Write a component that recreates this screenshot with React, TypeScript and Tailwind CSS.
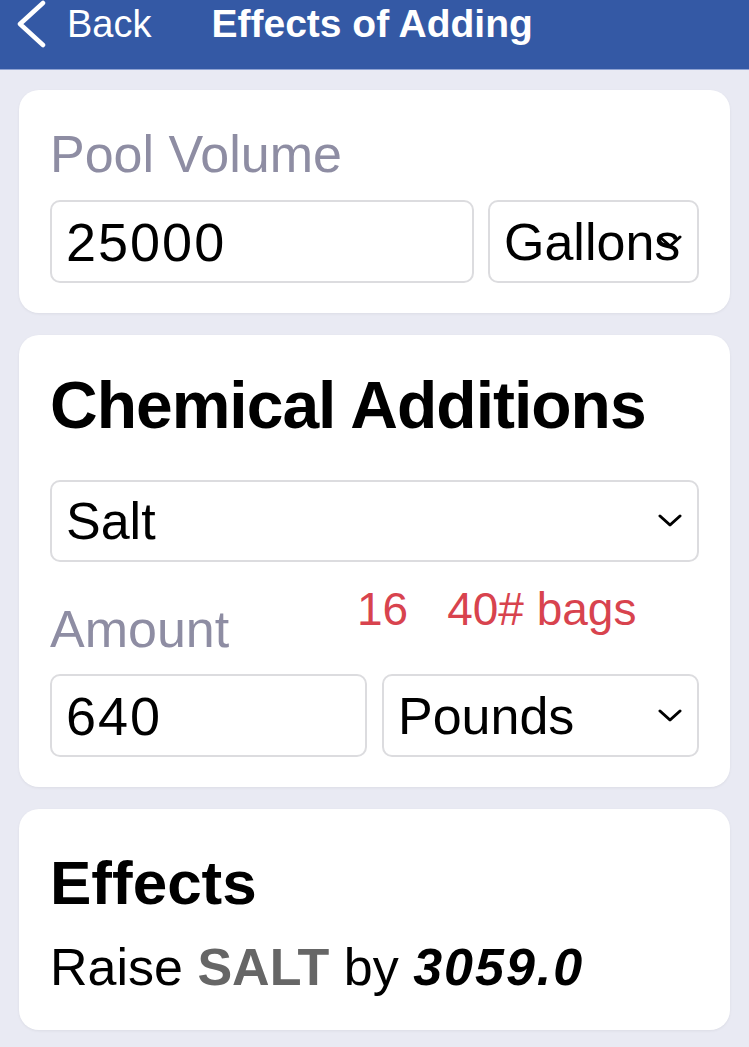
import React from "react";

function Chevron() {
  return (
    <svg
      width="24"
      height="14"
      viewBox="0 0 24 14"
      className="absolute right-[15px] top-1/2 -translate-y-1/2"
    >
      <polyline
        points="2,2 12,11 22,2"
        fill="none"
        stroke="#000"
        strokeWidth="3"
        strokeLinecap="round"
        strokeLinejoin="round"
      />
    </svg>
  );
}

function Field({
  value,
  select = false,
  numeric = false,
  className = "",
}: {
  value: string;
  select?: boolean;
  numeric?: boolean;
  className?: string;
}) {
  return (
    <div
      className={`relative flex h-[83px] items-center overflow-hidden rounded-[10px] border-2 border-[#dcdcdf] bg-white pl-[14px] ${className}`}
    >
      <span
        className={`whitespace-nowrap leading-none text-black ${
          numeric ? "text-[54px] tracking-[2px]" : "text-[52px]"
        }`}
      >
        {value}
      </span>
      {select && <Chevron />}
    </div>
  );
}

export default function App() {
  return (
    <div className="min-h-screen w-full bg-[#e9eaf3] font-['Liberation_Sans',Arial,sans-serif]">
      {/* Nav bar */}
      <header className="flex h-[70px] items-start border-b border-[#8fa3d3] bg-[#3459a5] text-white">
        <svg width="52" height="48" viewBox="0 0 52 48" className="ml-[8px] shrink-0">
          <polyline
            points="35,3 12,24 35,45"
            fill="none"
            stroke="#fff"
            strokeWidth="4.5"
            strokeLinecap="round"
            strokeLinejoin="round"
          />
        </svg>
        <span className="ml-[7px] mt-[5px] text-[38px] leading-none">Back</span>
        <span className="ml-[60px] mt-[4px] text-[39px] font-bold leading-none">
          Effects of Adding
        </span>
      </header>

      <main className="flex flex-col gap-[22px] px-[19px] pt-[20px] pb-[17px]">
        {/* Pool volume */}
        <section className="rounded-[20px] bg-white px-[31px] pt-[38px] pb-[30px] shadow-[0_1px_3px_rgba(0,0,0,0.06)]">
          <div className="text-[52px] leading-none text-[#8e8da3]">Pool Volume</div>
          <div className="mt-[20px] flex gap-[14px]">
            <Field value="25000" numeric className="flex-1" />
            <Field value="Gallons" select className="w-[211px] shrink-0" />
          </div>
        </section>

        {/* Chemical additions */}
        <section className="rounded-[20px] bg-white px-[31px] pt-[37px] pb-[30px] shadow-[0_1px_3px_rgba(0,0,0,0.06)]">
          <h1 className="text-[66px] font-bold leading-none tracking-[-1px] text-black">
            Chemical Additions
          </h1>
          <Field value="Salt" select className="mt-[42px] !h-[82px]" />
          <div className="mt-[24px] flex items-start">
            <div className="mt-[17px] w-[307px] shrink-0 text-[52px] leading-none text-[#8e8da3]">
              Amount
            </div>
            <div className="flex text-[46px] leading-none text-[#d8434e]">
              <span>16</span>
              <span className="ml-[39px]">40# bags</span>
            </div>
          </div>
          <div className="mt-[19px] grid grid-cols-2 gap-[15px]">
            <Field value="640" numeric />
            <Field value="Pounds" select />
          </div>
        </section>

        {/* Effects */}
        <section className="rounded-[20px] bg-white px-[31px] pt-[43px] pb-[37px] shadow-[0_1px_3px_rgba(0,0,0,0.06)]">
          <h2 className="text-[62px] font-bold leading-none text-black">Effects</h2>
          <p className="mt-[27px] whitespace-nowrap text-[52px] leading-none text-black">
            Raise <span className="font-bold text-[#666666]">SALT</span> by{" "}
            <span className="font-bold italic tracking-[2px]">3059.0</span>
          </p>
        </section>
      </main>
    </div>
  );
}
